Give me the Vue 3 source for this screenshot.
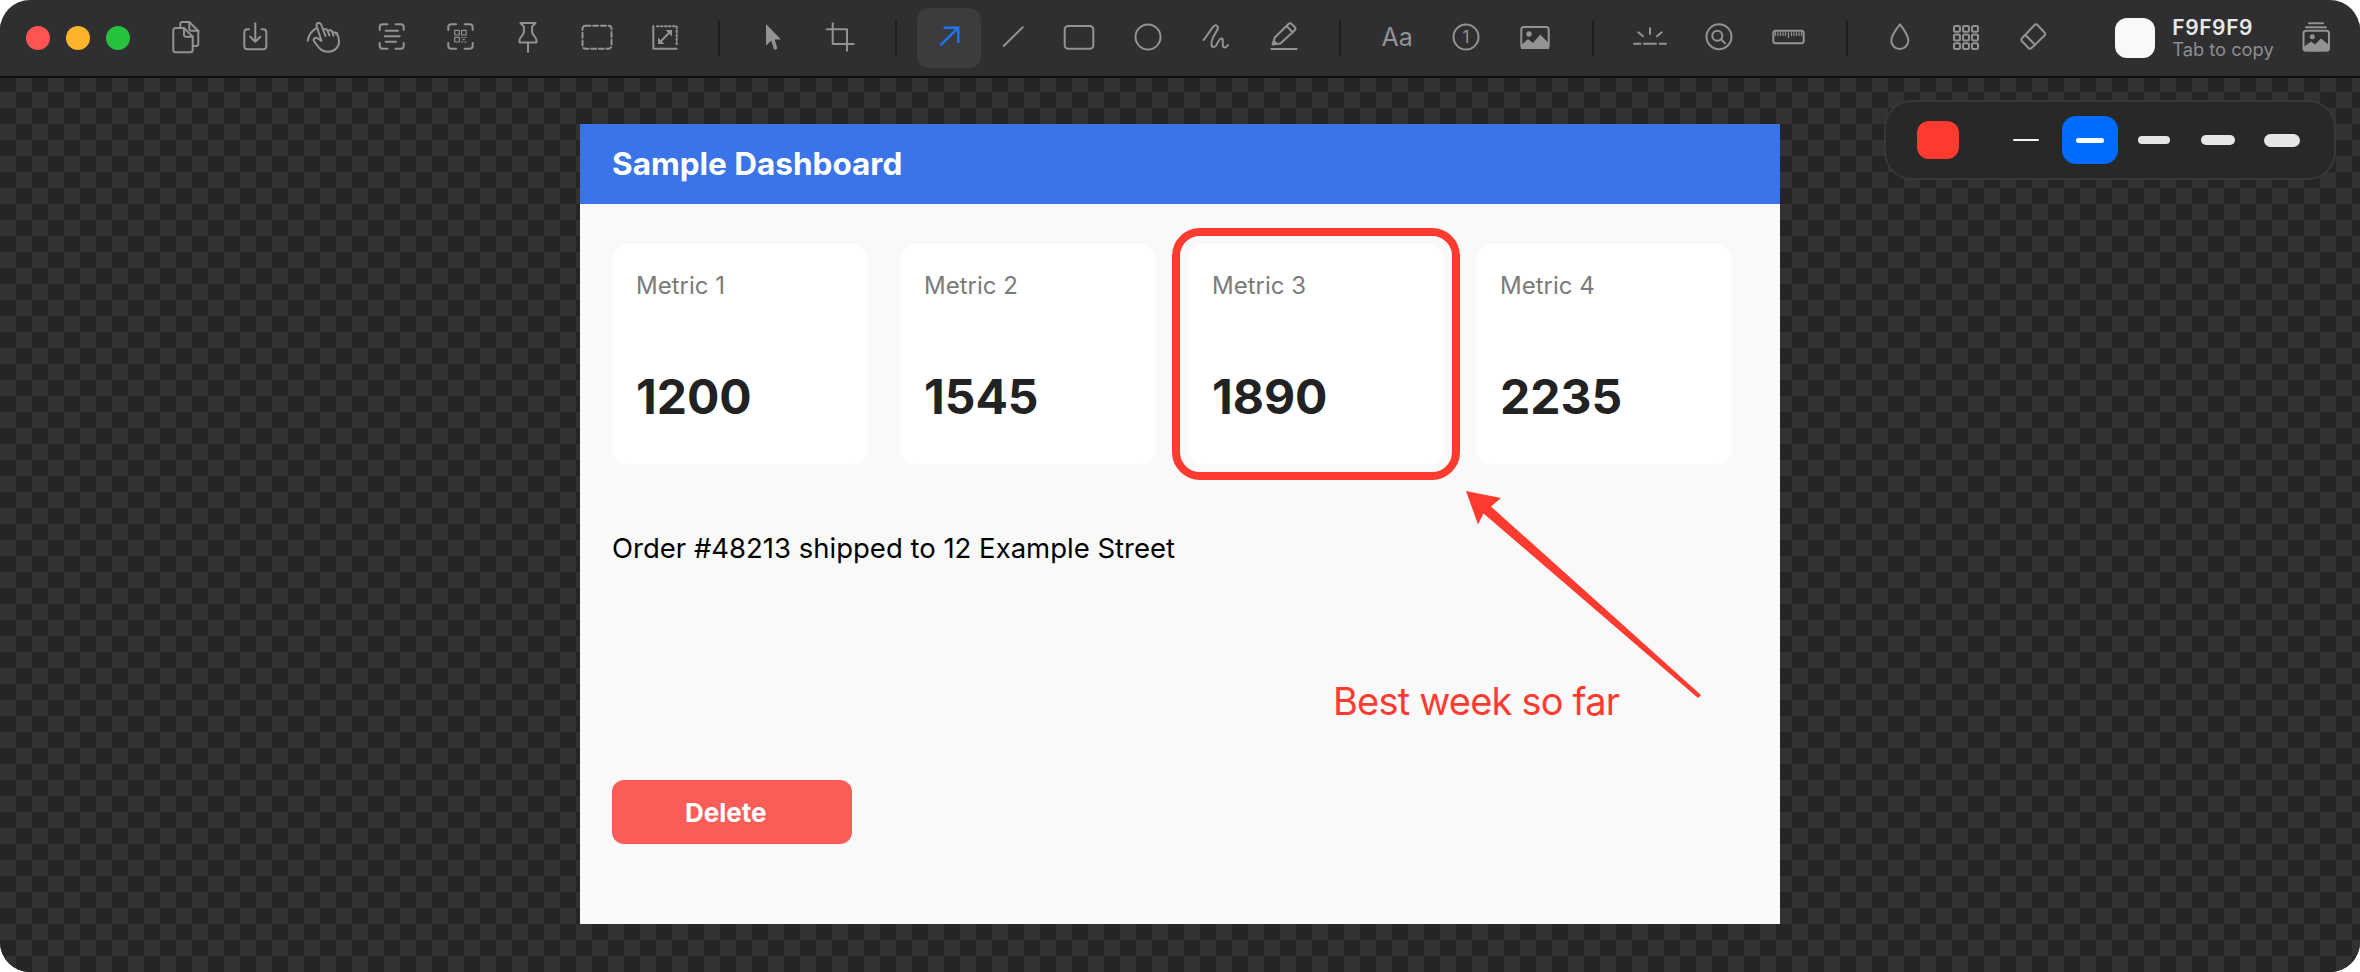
<script setup>
const metrics = [
  { label: 'Metric 1', value: 1200 },
  { label: 'Metric 2', value: 1545 },
  { label: 'Metric 3', value: 1890 },
  { label: 'Metric 4', value: 2235 },
]

// 3x3 swatch icon
const gridCells = []
for (let r = 0; r < 3; r++) {
  for (let c = 0; c < 3; c++) {
    gridCells.push({ x: 8 + c * 9, y: 8 + r * 8.6 })
  }
}
</script>

<template>
  <div class="window">
    <header class="toolbar">
      <div class="lights">
        <span class="light red"></span>
        <span class="light yellow"></span>
        <span class="light green"></span>
      </div>

      <div class="group g-capture">
        <span class="tool">
          <svg viewBox="0 0 40 40"><path d="M9.6 10H18l8.7 8.7V32a2.3 2.3 0 0 1-2.3 2.3H9.6A2.3 2.3 0 0 1 7.3 32V12.3A2.3 2.3 0 0 1 9.6 10z" /><path d="M18 10v6.7a2 2 0 0 0 2 2h6.7" /><path d="M14.3 9V6.3A2.3 2.3 0 0 1 16.6 4h6.7l9 9v12.7a2.3 2.3 0 0 1-2.3 2.3h-3" /><path d="M23.3 4v6.7a2 2 0 0 0 2 2h7" /></svg>
        </span>
        <span class="tool">
          <svg viewBox="0 0 40 40"><path d="M14 11.3h-1.7a3 3 0 0 0-3 3v14a3 3 0 0 0 3 3h16a3 3 0 0 0 3-3v-14a3 3 0 0 0-3-3h-1.8" /><path d="M20.3 5.3V23M15.3 18.7l5 5 5-5" /></svg>
        </span>
        <span class="tool">
          <svg viewBox="0 0 40 40"><path d="M4.7 22.7C5.500 17.500 8.500 13 13 10.300" /><path d="M13.500 7.800a2.400 2.400 0 0 1 4.600-1.300l4.400 11.500M13.500 7.800l5 15.200-4-2.600c-2.600-1.600-5 .8-3.200 3.200l5 6.400c2.400 2.700 5.600 3.700 9 3.700 6 0 10.800-4.400 10.800-10.200 0-2.600-1-5.600-2.400-8.600" /><path d="M21 11.400c1.900-.9 3.200 0 4 2.200l1.300 3.800M25.600 12.400c1.900-.8 3.200.2 3.900 2.300l1 2.900M30 14.400c1.500-.5 2.600.2 3.200 1.400" /></svg>
        </span>
        <span class="tool">
          <svg viewBox="0 0 40 40"><path d="M8.700 12V9.300a3 3 0 0 1 3-3h4.800M24.500 6.300h5.200a3 3 0 0 1 3 3V12M32.700 25v2.700a3 3 0 0 1-3 3h-5.200M16.500 30.700h-4.800a3 3 0 0 1-3-3V25" /><path d="M14.700 12.700H27M13.700 18.300h15M14.700 23.700H25" /></svg>
        </span>
        <span class="tool">
          <svg viewBox="0 0 40 40"><path d="M8.300 12V9.300a3 3 0 0 1 3-3h4.800M24.700 6.300h5a3 3 0 0 1 3 3V12M32.700 25v2.700a3 3 0 0 1-3 3h-5M16.100 30.700h-4.800a3 3 0 0 1-3-3V25" /><g class="thin"><rect x="14.700" y="12.400" width="4.600" height="4.600" /><rect x="21.600" y="12.400" width="4.600" height="4.600" /><rect x="14.700" y="19.400" width="4.600" height="4.600" /><path d="M21.600 19.500h1.300M24.900 19.500h1.300M23 21.700h1.300M21.600 24h1.300M24.900 24h1.300" /></g></svg>
        </span>
        <span class="tool">
          <svg viewBox="0 0 40 40"><path d="M12.500 5h15l-3.400 3.600V14c0 3 4.400 5 4.400 8.500v2H11.500v-2c0-3.500 4.400-5.500 4.400-8.500V8.600zM20 24.500V34" /></svg>
        </span>
        <span class="tool">
          <svg viewBox="0 0 40 40"><rect x="5.500" y="7.700" width="29" height="23" rx="3" stroke-dasharray="5 2.700" /></svg>
        </span>
        <span class="tool">
          <svg viewBox="0 0 40 40"><path d="M8.300 8v22.700h23.400" /><path d="M12 8.300h19.700V27" stroke-dasharray="1.600 2.400" /><path d="M14.500 24.500 26 13" /><path class="solid" d="M20.500 12h6.500v6.500zM13 19.500V26h6.500z" /></svg>
        </span>
      </div>

      <span class="sep s1"></span>

      <div class="group g-select">
        <span class="tool">
          <svg viewBox="0 0 40 40"><path class="solid" d="M13 6l15 15.500h-6.300L24.300 30.500 21.200 32 18.300 22.700 13 27.500z" /></svg>
        </span>
        <span class="tool">
          <svg viewBox="0 0 40 40"><path d="M6.700 11.300H27v21.400M12.700 5.300V26h21" /></svg>
        </span>
      </div>

      <span class="sep s2"></span>

      <div class="group g-draw">
        <span class="tool narrow active">
          <svg viewBox="0 0 40 40"><path class="blue" d="M11.300 27.300 29.300 9.700M14.700 9.700h14.600v15" /></svg>
        </span>
        <span class="tool narrow">
          <svg viewBox="0 0 40 40"><path d="M10.700 28 29.700 9.300" /></svg>
        </span>
        <span class="tool">
          <svg viewBox="0 0 40 40"><rect x="5.700" y="8" width="28.600" height="22.700" rx="3.500" /></svg>
        </span>
        <span class="tool">
          <svg viewBox="0 0 40 40"><circle cx="20" cy="19" r="12.500" /></svg>
        </span>
        <span class="tool">
          <svg viewBox="0 0 40 40"><path d="M7.500 22C11 18 15 11 17.500 8.500 20 6 23 8 21.500 11.500 20 15 14.500 21 15.500 26.500 16 30 19 29.500 20.500 27 22 24 23.500 19.500 26 20.500 28 21.500 25.500 27 27.500 29 29 30 31 28.500 32 27" /></svg>
        </span>
        <span class="tool">
          <svg viewBox="0 0 40 40"><path d="M7.300 31h25.400" /><path d="M8.500 26.500 10.800 19.500 24.500 6c1-1 2.300-1 3.200 0l3 3c1 1 1 2.200 0 3.200L16.500 25.500zM22.500 8l6.500 6.500" /><path class="solid" d="M8.500 26.500 10 21.800 13.500 25z" /></svg>
        </span>
      </div>

      <span class="sep s3"></span>

      <div class="group g-insert">
        <span class="tool aa">Aa</span>
        <span class="tool">
          <svg viewBox="0 0 40 40"><circle cx="20" cy="19" r="12.500" /><text x="20" y="25" class="num">1</text></svg>
        </span>
        <span class="tool">
          <svg viewBox="0 0 40 40"><rect x="6.300" y="9" width="27.400" height="21" rx="2.500" /><circle class="solid" cx="14" cy="16" r="2.700" /><path class="solid" d="M6 27.500 13 21l5 4 7.300-8.500L34 25.500V31H6z" /></svg>
        </span>
      </div>

      <span class="sep s4"></span>

      <div class="group g-effect">
        <span class="tool">
          <svg viewBox="0 0 40 40"><path d="M20 10.300V16M8.300 14.300l4.700 4M31.700 14.300 27 18.300M4 25.700h6.300M14 25.700h12M29.700 25.700H36" /></svg>
        </span>
        <span class="tool">
          <svg viewBox="0 0 40 40"><circle cx="20" cy="18.700" r="12.500" /><circle cx="18.300" cy="17.700" r="5" /><path d="M22 21.300l4 4" /></svg>
        </span>
        <span class="tool">
          <svg viewBox="0 0 40 40"><rect x="5.300" y="12.700" width="30.400" height="12.600" rx="2.500" /><path class="thin" d="M7.500 14.500v3M10 14.500v3M12.500 14.500v3M15 14.500v3M17.500 14.500v3M20.500 14.500v5M23.500 14.500v3M26 14.500v3M28.500 14.500v3M31 14.500v3M33.500 14.500v3" /></svg>
        </span>
      </div>

      <span class="sep s5"></span>

      <div class="group g-misc">
        <span class="tool">
          <svg viewBox="0 0 40 40"><path d="M20 6.300s-8.700 10.700-8.700 16.200a8.500 8.500 0 0 0 17 0C28.300 17 20 6.300 20 6.300z" /></svg>
        </span>
        <span class="tool">
          <svg viewBox="0 0 40 40"><rect v-for="(cell, i) in gridCells" :key="i" :x="cell.x" :y="cell.y" width="6" height="5.800" rx="1.500" /></svg>
        </span>
        <span class="tool">
          <svg viewBox="0 0 40 40"><path d="M21.500 7a2 2 0 0 1 3 0l7 7.500a2 2 0 0 1 0 3L18.500 30a2 2 0 0 1-3 0l-6.500-6.700a2 2 0 0 1 0-3zM12.500 17l9.700 10" /></svg>
        </span>
      </div>

      <div class="picked">
        <span class="picked-swatch"></span>
        <div class="picked-text">
          <div class="picked-hex">F9F9F9</div>
          <div class="picked-hint">Tab to copy</div>
        </div>
      </div>

      <span class="tool last">
        <svg viewBox="0 0 40 40"><path d="M13 5.300h14M10 9.300h20" /><rect x="7.500" y="12.700" width="25.500" height="20" rx="2.500" /><circle class="solid" cx="16.300" cy="18.700" r="2.500" /><path class="solid" d="M7.500 29 15 23.500l4 3 6-6 8 6.500v5.700H7.500z" /></svg>
      </span>
    </header>

    <main class="canvas">
      <section class="panel">
        <div class="panel-head">Sample Dashboard</div>
        <div class="panel-body">
          <div class="cards">
            <div v-for="m in metrics" :key="m.label" class="card">
              <div class="card-label">{{ m.label }}</div>
              <div class="card-value">{{ m.value }}</div>
            </div>
          </div>
          <p class="order">Order #48213 shipped to 12 Example Street</p>
          <button class="delete">Delete</button>
        </div>
      </section>

      <!-- annotations drawn on top of the capture -->
      <div class="mark-rect"></div>
      <svg class="mark-arrow" viewBox="0 0 260 230">
        <path d="M6 1 41 8 31 16.500 241 205 238 208 23.500 23.500 18 34.500z" />
      </svg>
      <div class="mark-text">Best week so far</div>

      <div class="stroke-panel">
        <span class="stroke-color"></span>
        <span class="stroke w1"></span>
        <span class="stroke-on"><span class="stroke w2"></span></span>
        <span class="stroke w3"></span>
        <span class="stroke w4"></span>
        <span class="stroke w5"></span>
      </div>
    </main>
  </div>
</template>

<style>
html, body {
  margin: 0;
  background: #fff;
}
</style>

<style scoped>
.window {
  width: 2360px;
  height: 972px;
  border-radius: 30px;
  overflow: hidden;
  font-family: Inter, "Liberation Sans", sans-serif;
  display: flex;
  flex-direction: column;
}

/* toolbar */
.toolbar {
  height: 76px;
  flex: none;
  position: relative;
  z-index: 1;
  background: #2f2f31;
  box-shadow: 0 2px 0 #0e0e0e;
  display: flex;
  align-items: center;
}
.lights {
  display: flex;
  gap: 16px;
  margin-left: 26px;
}
.light {
  width: 24px;
  height: 24px;
  border-radius: 50%;
}
.red { background: #ff5552; }
.yellow { background: #feb42a; }
.green { background: #26c23c; }

.group {
  display: flex;
  align-items: center;
}
.tool {
  width: var(--tool, 68.4px);
  height: 60px;
  flex: none;
  display: flex;
  align-items: center;
  justify-content: center;
  border-radius: 12px;
}
.tool svg {
  width: 40px;
  height: 40px;
  fill: none;
  stroke: #939393;
  stroke-width: 2;
  stroke-linecap: round;
  stroke-linejoin: round;
}
.tool svg .thin { stroke-width: 1.2; }
.tool svg .solid { fill: #939393; stroke: none; }
.tool svg .blue { stroke: #1a78f6; stroke-width: 2.4; stroke-linecap: butt; stroke-linejoin: miter; }
.tool svg .num {
  fill: #939393;
  stroke: none;
  font-size: 17px;
  text-anchor: middle;
}
.tool.narrow { width: 64px; }
.tool.active { background: #3c3c3e; }
.tool.aa {
  color: #939393;
  font-size: 25px;
  margin-top: -2px;
}

.sep {
  width: 2px;
  height: 36px;
  flex: none;
  background: #1f1f20;
}
.lights + .group { margin-left: 22px; }
.s1 { margin-left: 19px; }
.g-select { --tool: 67px; margin-left: 19px; }
.s2 { margin-left: 22px; }
.g-draw { margin-left: 20px; }
.s3 { margin-left: 20px; }
.g-insert { --tool: 69px; margin-left: 22px; }
.s4 { margin-left: 22px; }
.g-effect { --tool: 69px; margin-left: 22px; }
.s5 { margin-left: 23px; }
.g-misc { --tool: 66.5px; margin-left: 19px; }

.picked {
  display: flex;
  align-items: center;
  gap: 17px;
  margin-left: 49px;
}
.picked-swatch {
  width: 40px;
  height: 40px;
  border-radius: 12px;
  background: #f9f9f9;
}
.picked-hex {
  color: #e8e8e8;
  font-size: 21px;
  font-weight: 600;
  line-height: 22px;
  letter-spacing: 0.6px;
}
.picked-hint {
  color: #8d8d8d;
  font-size: 18.3px;
  line-height: 20px;
}
.tool.last { margin-left: 22px; --tool: 40px; }

/* canvas */
.canvas {
  flex: 1;
  position: relative;
  display: flex;
  justify-content: center;
  padding-top: 48px;
  background-color: #252525;
  background-image: conic-gradient(#323232 25%, #252525 0 50%, #323232 0 75%, #252525 0);
  background-size: 32px 32px;
}

.panel {
  width: 1200px;
  height: 800px;
  background: #f9f9f9;
  display: flex;
  flex-direction: column;
}
.panel-head {
  height: 80px;
  flex: none;
  background: #3a74e8;
  color: #fff;
  font-size: 31.5px;
  font-weight: 700;
  line-height: 80px;
  padding-left: 32px;
}
.panel-body {
  padding: 40px 32px 0;
}
.cards {
  display: flex;
  gap: 32px;
}
.card {
  width: 256px;
  height: 220px;
  box-sizing: border-box;
  background: #fff;
  border-radius: 16px;
  padding: 27px 24px;
}
.card-label {
  color: #7b7b7b;
  font-size: 24px;
  line-height: 30px;
}
.card-value {
  color: #222;
  font-size: 48px;
  font-weight: 700;
  line-height: 58px;
  margin-top: 67px;
}
.order {
  margin: 66px 0 0;
  color: #000;
  font-size: 27.5px;
  line-height: 36px;
}
.delete {
  display: block;
  width: 240px;
  height: 64px;
  margin-top: 214px;
  padding: 0 0 0 73px;
  border: 0;
  border-radius: 12px;
  background: #fa5d58;
  color: #fff;
  font-family: inherit;
  font-size: 26px;
  font-weight: 700;
  text-align: left;
}

/* annotations */
.mark-rect {
  position: absolute;
  left: 1172px;
  top: 152px;
  width: 288px;
  height: 252px;
  box-sizing: border-box;
  border: 8px solid #ff3b30;
  border-radius: 28px;
}
.mark-arrow {
  position: absolute;
  left: 1460px;
  top: 414px;
  width: 260px;
  height: 230px;
}
.mark-arrow path {
  fill: #ff3b30;
}
.mark-text {
  position: absolute;
  left: 1333px;
  top: 602px;
  color: #ff3b30;
  font-size: 38px;
  line-height: 46px;
  letter-spacing: -0.8px;
  white-space: nowrap;
}

/* stroke popover */
.stroke-panel {
  position: absolute;
  left: 1884px;
  top: 24px;
  width: 452px;
  height: 80px;
  box-sizing: border-box;
  background: #282828;
  border: 2px solid #383838;
  border-radius: 28px;
  display: flex;
  align-items: center;
}
.stroke-color {
  width: 42px;
  height: 38px;
  margin-left: 31px;
  border-radius: 12px;
  background: #ff3b30;
}
.stroke {
  display: block;
  background: #e6e6e6;
  border-radius: 8px;
}
.w1 { width: 26px; height: 2px; margin-left: 54px; background: #f2f2f2; }
.stroke-on {
  width: 56px;
  height: 48px;
  margin-left: 23px;
  border-radius: 14px;
  background: #006cff;
  display: flex;
  align-items: center;
  justify-content: center;
}
.w2 { width: 28px; height: 5px; background: #fff; }
.w3 { width: 32px; height: 8px; margin-left: 20px; }
.w4 { width: 34px; height: 10px; margin-left: 31px; }
.w5 { width: 36px; height: 13px; margin-left: 29px; }
</style>
